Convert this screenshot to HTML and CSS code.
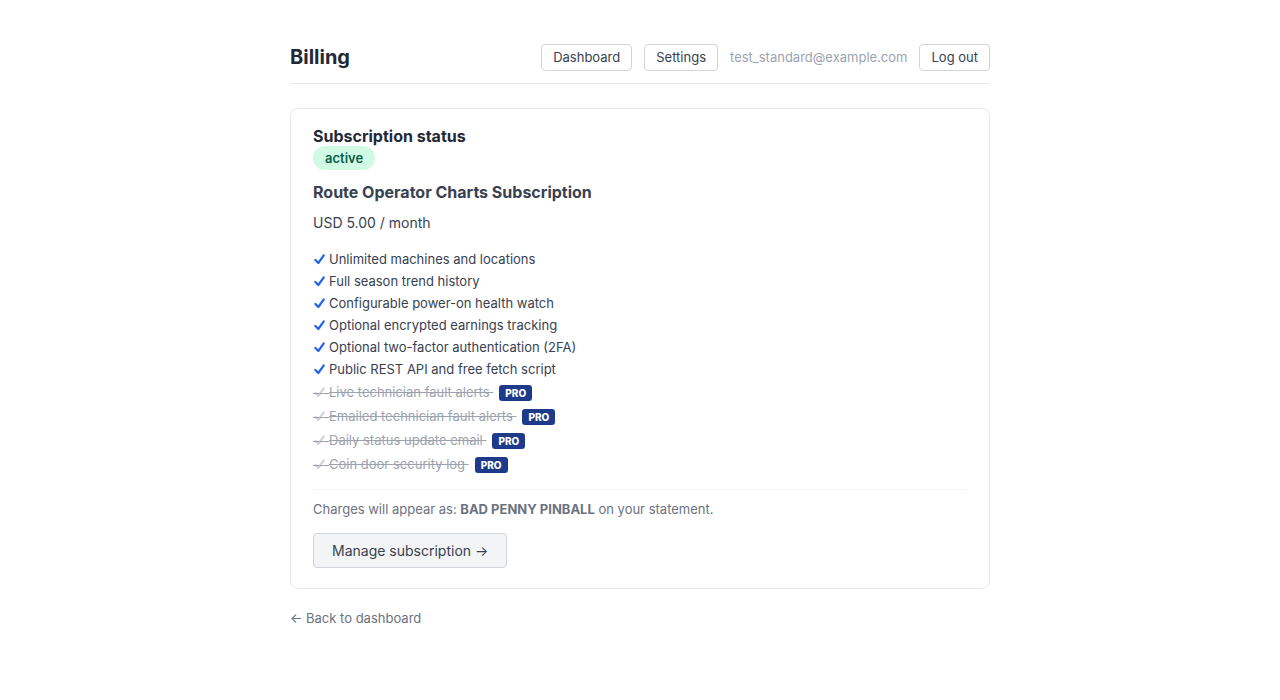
FILE: index.html
```
<!DOCTYPE html>
<html lang="en">
  <head>
    <meta charset="UTF-8" />
    <meta name="viewport" content="width=device-width, initial-scale=1.0" />
    <title>Billing</title>
    <link rel="stylesheet" href="styles.css">
  </head>

  <body>
    <svg class="defs" aria-hidden="true">
      <symbol id="check" viewBox="0 0 16 14">
        <path d="M2.4 7.9 5.3 11 10.8 3.3" />
      </symbol>
    </svg>

    <div class="page">
      <header class="header">
        <h1>Billing</h1>
        <nav class="nav">
          <a class="btn" href="#dashboard">Dashboard</a>
          <a class="btn" href="#settings">Settings</a>
          <span class="email">test_standard@example.com</span>
          <button class="btn" type="button">Log out</button>
        </nav>
      </header>

      <main class="card">
        <h2>Subscription status</h2>
        <span class="status">active</span>
        <h3>Route Operator Charts Subscription</h3>
        <p class="price">USD 5.00 / month</p>

        <ul class="features">
          <li><svg class="check"><use href="#check" /></svg>Unlimited machines and locations</li>
          <li><svg class="check"><use href="#check" /></svg>Full season trend history</li>
          <li><svg class="check"><use href="#check" /></svg>Configurable power-on health watch</li>
          <li><svg class="check"><use href="#check" /></svg>Optional encrypted earnings tracking</li>
          <li><svg class="check"><use href="#check" /></svg>Optional two-factor authentication (2FA)</li>
          <li><svg class="check"><use href="#check" /></svg>Public REST API and free fetch script</li>
          <li class="locked"><svg class="check"><use href="#check" /><path class="strike" d="M0 8.5H16" /></svg><s>Live technician fault alerts </s><span class="pro">PRO</span></li>
          <li class="locked"><svg class="check"><use href="#check" /><path class="strike" d="M0 8.5H16" /></svg><s>Emailed technician fault alerts </s><span class="pro">PRO</span></li>
          <li class="locked"><svg class="check"><use href="#check" /><path class="strike" d="M0 8.5H16" /></svg><s>Daily status update email </s><span class="pro">PRO</span></li>
          <li class="locked"><svg class="check"><use href="#check" /><path class="strike" d="M0 8.5H16" /></svg><s>Coin door security log </s><span class="pro">PRO</span></li>
        </ul>

        <p class="charges">Charges will appear as: <strong>BAD PENNY PINBALL</strong> on your statement.</p>
        <button class="manage" type="button">Manage subscription →</button>
      </main>

      <a class="back" href="#dashboard">← Back to dashboard</a>
    </div>
  </body>
</html>
```

FILE: styles.css
```
* {
  box-sizing: border-box;
}

body {
  margin: 0;
  background: #fff;
  color: #1f2937;
  font-family: Inter, "Liberation Sans", sans-serif;
  font-size: 14px;
}

h1,
h2,
h3,
p,
ul {
  margin: 0;
  padding: 0;
}

.defs {
  position: absolute;
  width: 0;
  height: 0;
}

.page {
  max-width: 740px;
  margin: 0 auto;
  padding: 44px 20px;
}

.header {
  display: flex;
  align-items: center;
  justify-content: space-between;
  padding-bottom: 12px;
  border-bottom: 1px solid #e5e7eb;
  margin-bottom: 24px;
}

h1 {
  font-size: 20px;
  line-height: 27px;
}

.nav {
  display: flex;
  align-items: center;
  gap: 12px;
}

.btn {
  padding: 4px 11px;
  border: 1px solid #d1d5db;
  border-radius: 4px;
  background: #fff;
  color: #374151;
  font-family: inherit;
  font-size: 13px;
  line-height: 17px;
  text-decoration: none;
}

.email {
  color: #9ca3af;
  font-size: 13px;
  line-height: 17px;
}

.card {
  padding: 18px 22px 20px;
  border: 1px solid #e5e7eb;
  border-radius: 8px;
}

h2 {
  font-size: 16px;
  line-height: 19px;
}

.status {
  display: table;
  padding: 0 12px;
  border-radius: 12px;
  background: #d1fae5;
  color: #065f46;
  font-size: 13px;
  font-weight: 600;
  line-height: 24px;
}

h3 {
  margin-top: 12px;
  color: #374151;
  font-size: 16px;
  line-height: 20px;
}

.price {
  margin-top: 10px;
  color: #374151;
  line-height: 22px;
}

.features {
  margin-top: 14px;
  color: #374151;
  font-size: 13px;
  line-height: 22px;
  list-style: none;
}

.check {
  width: 16px;
  height: 14px;
  vertical-align: -2px;
  fill: none;
  stroke: #2563eb;
  stroke-width: 2.2;
  stroke-linecap: round;
  stroke-linejoin: round;
}

.locked {
  color: #9ca3af;
  line-height: 24px;
}

.locked .check {
  stroke: #d1d5db;
}

.locked .strike {
  stroke: #9ca3af;
  stroke-width: 1;
}

.pro {
  display: inline-block;
  margin-left: 6px;
  padding: 0 6px;
  border-radius: 3px;
  background: #1e3a8a;
  color: #fff;
  font-size: 10px;
  font-weight: 800;
  line-height: 16px;
}

.charges {
  margin-top: 13px;
  padding-top: 9px;
  border-top: 1px solid #f3f4f6;
  color: #6b7280;
  font-size: 13px;
  line-height: 20px;
}

.manage {
  display: block;
  margin-top: 14px;
  padding: 8px 18px;
  border: 1px solid #d1d5db;
  border-radius: 4px;
  background: #f3f4f6;
  color: #374151;
  font-family: inherit;
  font-size: 14px;
  line-height: 17px;
}

.back {
  display: inline-block;
  margin-top: 19px;
  color: #6b7280;
  font-size: 13px;
  line-height: 20px;
  text-decoration: none;
}
```
